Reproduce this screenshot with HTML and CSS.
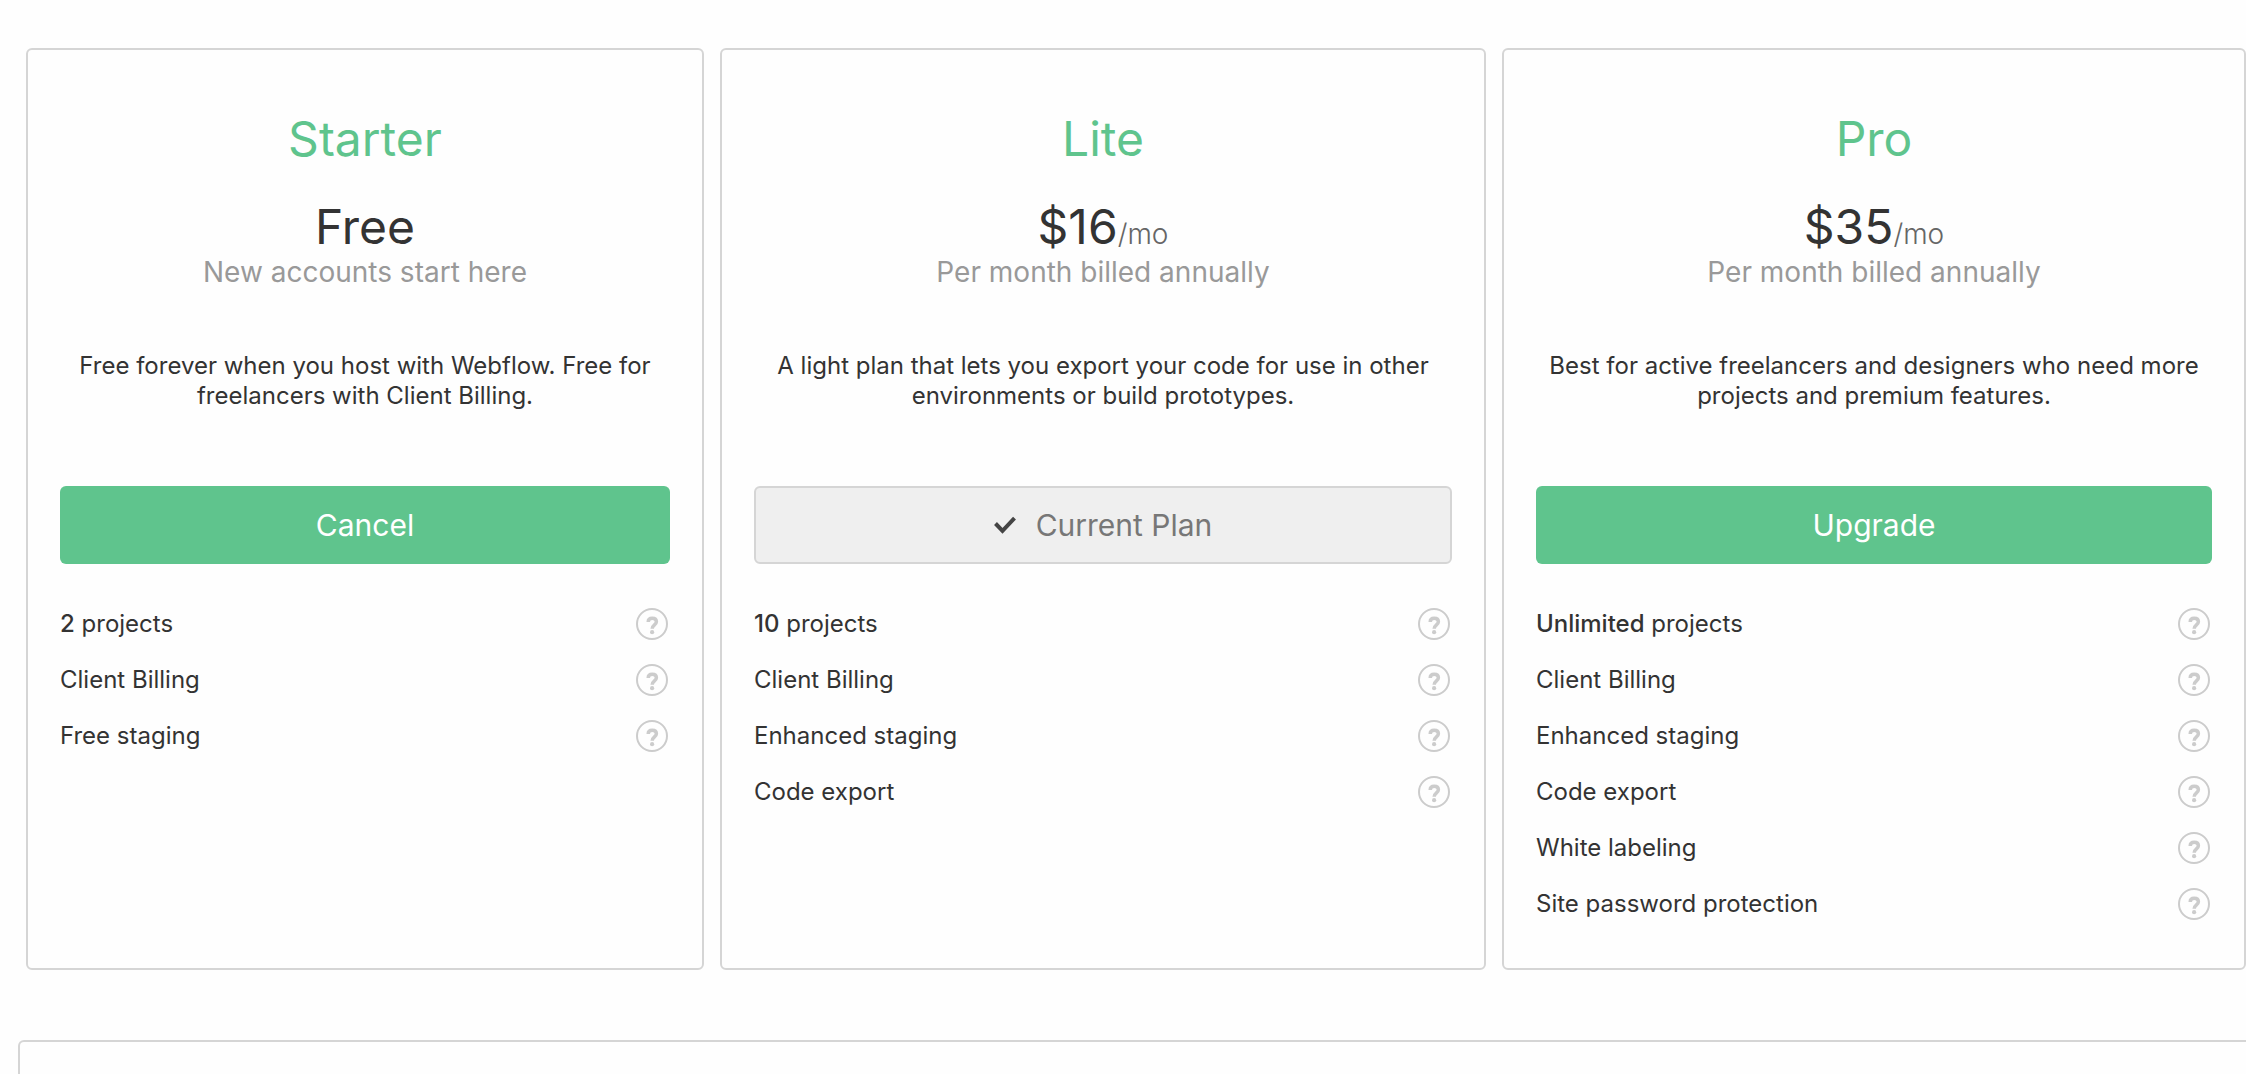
FILE: index.html
```html
<!DOCTYPE html>
<html lang="en">
<head>
<meta charset="utf-8">
<meta name="viewport" content="width=device-width, initial-scale=1">
<title>Account plans</title>
<link rel="stylesheet" href="styles.css">
</head>
<body>
<svg class="sprite" aria-hidden="true">
  <symbol id="help" viewBox="0 0 32 32">
    <circle cx="16" cy="16" r="15" fill="none" stroke="currentColor" stroke-width="2"/>
    <path d="M12.200 14C12.200 11.500 13.800 10.200 16.200 10.200c2.500 0 4.200 1.300 4.200 3.500 0 3.100-4.200 3.200-4.200 7" fill="none" stroke="currentColor" stroke-width="3.500"/>
    <circle cx="16.100" cy="24.200" r="2.100" fill="currentColor"/>
  </symbol>
</svg>
<main class="page">
  <div class="plans">
    <section class="plan">
      <h2 class="plan-name">Starter</h2>
      <p class="price">Free</p>
      <p class="billing">New accounts start here</p>
      <p class="description">Free forever when you host with Webflow. Free for freelancers with Client Billing.</p>
      <button class="action" type="button">Cancel</button>
      <ul class="features">
        <li class="feature"><span><b>2</b> projects</span><button class="help" type="button" aria-label="About projects"><svg><use href="#help"/></svg></button></li>
        <li class="feature"><span>Client Billing</span><button class="help" type="button" aria-label="About Client Billing"><svg><use href="#help"/></svg></button></li>
        <li class="feature"><span>Free staging</span><button class="help" type="button" aria-label="About free staging"><svg><use href="#help"/></svg></button></li>
      </ul>
    </section>
    <section class="plan">
      <h2 class="plan-name">Lite</h2>
      <p class="price">$16<span class="period">/mo</span></p>
      <p class="billing">Per month billed annually</p>
      <p class="description">A light plan that lets you export your code for use in other environments or build prototypes.</p>
      <button class="action action-current" type="button"><svg class="check" viewBox="0 0 22 18" aria-hidden="true"><path d="M1.500 7.500 8.500 14.800 20.500 2.200" fill="none" stroke="currentColor" stroke-width="4"/></svg>Current Plan</button>
      <ul class="features">
        <li class="feature"><span><b>10</b> projects</span><button class="help" type="button" aria-label="About projects"><svg><use href="#help"/></svg></button></li>
        <li class="feature"><span>Client Billing</span><button class="help" type="button" aria-label="About Client Billing"><svg><use href="#help"/></svg></button></li>
        <li class="feature"><span>Enhanced staging</span><button class="help" type="button" aria-label="About enhanced staging"><svg><use href="#help"/></svg></button></li>
        <li class="feature"><span>Code export</span><button class="help" type="button" aria-label="About code export"><svg><use href="#help"/></svg></button></li>
      </ul>
    </section>
    <section class="plan">
      <h2 class="plan-name">Pro</h2>
      <p class="price">$35<span class="period">/mo</span></p>
      <p class="billing">Per month billed annually</p>
      <p class="description">Best for active freelancers and designers who need more projects and premium features.</p>
      <button class="action" type="button">Upgrade</button>
      <ul class="features">
        <li class="feature"><span><b>Unlimited</b> projects</span><button class="help" type="button" aria-label="About projects"><svg><use href="#help"/></svg></button></li>
        <li class="feature"><span>Client Billing</span><button class="help" type="button" aria-label="About Client Billing"><svg><use href="#help"/></svg></button></li>
        <li class="feature"><span>Enhanced staging</span><button class="help" type="button" aria-label="About enhanced staging"><svg><use href="#help"/></svg></button></li>
        <li class="feature"><span>Code export</span><button class="help" type="button" aria-label="About code export"><svg><use href="#help"/></svg></button></li>
        <li class="feature"><span>White labeling</span><button class="help" type="button" aria-label="About white labeling"><svg><use href="#help"/></svg></button></li>
        <li class="feature"><span>Site password protection</span><button class="help" type="button" aria-label="About site password protection"><svg><use href="#help"/></svg></button></li>
      </ul>
    </section>
  </div>
  <section class="panel"></section>
</main>
</body>
</html>
```
FILE: styles.css
```css
* {
  box-sizing: border-box;
}

body {
  margin: 0;
  background: #fefefe;
  color: #333;
  font-family: Inter, "Liberation Sans", sans-serif;
  font-size: 24px;
  line-height: 30px;
}

h2, p, ul {
  margin: 0;
  padding: 0;
  font-weight: 400;
}

button {
  padding: 0;
  border: 0;
  font: inherit;
  cursor: pointer;
}

.sprite {
  display: none;
}

.page {
  display: flex;
  flex-direction: column;
  gap: 70px;
  min-height: 100vh;
  padding-top: 48px;
  overflow-x: hidden;
}

.plans {
  display: grid;
  grid-template-columns: 678fr 766fr 744fr;
  gap: 16px;
  padding-left: 26px;
}

.plan {
  display: flex;
  flex-direction: column;
  padding: 60px 32px 36px;
  border: 2px solid #d5d5d5;
  border-radius: 6px;
  text-align: center;
}

.plan-name {
  margin-bottom: 30px;
  color: #5fc48d;
  font-size: 48px;
  line-height: 58px;
}

.price {
  font-size: 48px;
  line-height: 58px;
}

.period {
  color: #666;
  font-size: 28px;
  font-weight: 300;
  line-height: 32px;
}

.billing {
  margin-bottom: 63px;
  color: #999;
  font-size: 28px;
  line-height: 32px;
}

.description {
  margin-bottom: 75px;
}

.action {
  display: flex;
  align-items: center;
  justify-content: center;
  gap: 20px;
  height: 78px;
  margin-bottom: 32px;
  border-radius: 6px;
  background: #5fc48d;
  color: #fff;
  font-size: 30px;
}

.action-current {
  border: 2px solid #d5d5d5;
  background: #efefef;
  color: #777;
}

.check {
  width: 22px;
  height: 18px;
  color: #444;
}

.features {
  list-style: none;
  text-align: left;
}

.feature {
  display: flex;
  align-items: center;
  justify-content: space-between;
  height: 56px;
  padding-right: 2px;
}

.feature b {
  font-weight: 500;
}

.help {
  width: 32px;
  height: 32px;
  background: none;
  color: #ccc;
}

.help svg {
  display: block;
  width: 32px;
  height: 32px;
}

.panel {
  flex: 1;
  min-height: 34px;
  margin: 0 -18px 0 18px;
  border: 2px solid #d5d5d5;
  border-bottom: 0;
  border-radius: 6px 6px 0 0;
}
```
